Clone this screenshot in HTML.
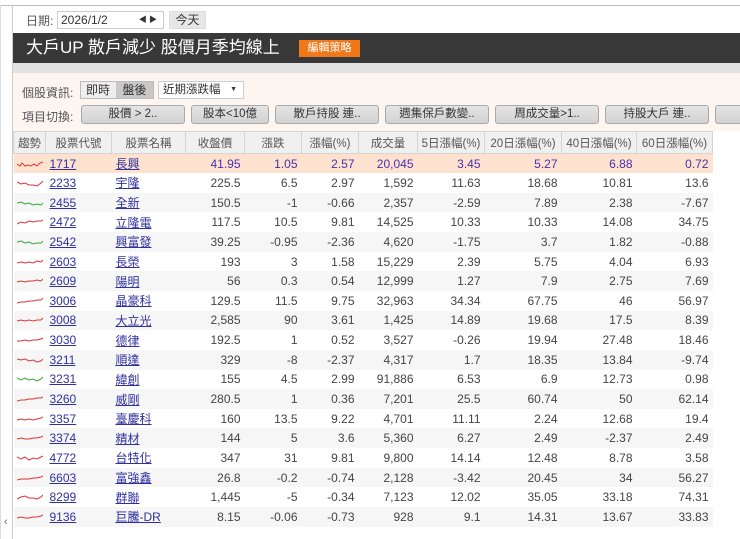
<!DOCTYPE html>
<html><head><meta charset="utf-8"><style>
*{margin:0;padding:0;box-sizing:border-box}
body{width:740px;height:539px;overflow:hidden;background:#fff;font-family:"Liberation Sans","Noto Sans CJK TC",sans-serif;font-size:12px;color:#444;position:relative}
.a{position:absolute}
.btn{position:absolute;top:105px;height:19px;background:linear-gradient(#e4e4e4,#d2d2d2);border:1px solid #aaa;border-radius:3px;font-size:11.5px;color:#333;text-align:center;line-height:17px}
table{position:absolute;left:13px;top:131px;border-collapse:collapse;table-layout:fixed;width:699px}
th{height:22px;background:#f0f0f0;border:1px solid #d4d4d4;font-weight:normal;font-size:11.5px;color:#555}
td{height:19.65px;text-align:right;padding-right:4px;font-size:12px;color:#444;white-space:nowrap}
tr:nth-child(even) td{background:#f6f6f6}
tr.hl td{background:#fde3cf;color:#4b2fb0}
td.c,td.n{text-align:left;padding-left:4px}
td a{color:#3030a0;text-decoration:underline}
td.t{padding:0 2px;text-align:center}
</style></head><body>
<div class="a" style="left:0;top:5px;width:740px;height:1px;background:#bbb"></div>
<div class="a" style="left:12px;top:5px;width:1px;height:534px;background:#ccc"></div>
<div class="a" style="left:0;top:5px;width:1px;height:534px;background:#ddd"></div>
<div class="a" style="left:4px;top:516px;font-size:11px;color:#666">‹</div>
<div class="a" style="left:26px;top:12px;font-size:12px;color:#555">日期:</div>
<div class="a" style="left:57px;top:11px;width:107px;height:18px;border:1px solid #ccc;font-size:12px;line-height:16px;padding-left:3px;color:#333">2026/1/2<span style="position:absolute;right:6px;font-size:8px">◀ ▶</span></div>
<div class="a" style="left:169px;top:11px;width:37px;height:18px;background:#e6e6e6;border:1px solid #ddd;text-align:center;line-height:16px;color:#333">今天</div>
<div class="a" style="left:13px;top:33px;width:727px;height:30px;background:#383838"></div>
<div class="a" style="left:26px;top:36px;font-size:17px;color:#fff;line-height:24px;white-space:nowrap">大戶UP 散戶減少 股價月季均線上</div>
<div class="a" style="left:299px;top:40px;width:61px;height:17px;background:#f07818;color:#fff;font-size:11px;text-align:center;line-height:17px">編輯策略</div>
<div class="a" style="left:13px;top:63px;width:727px;height:10px;background:#e2e2e2"></div>
<div class="a" style="left:13px;top:73px;width:727px;height:58px;background:#fdf5f0"></div>
<div class="a" style="left:22px;top:84px;color:#555">個股資訊:</div>
<div class="a" style="left:80px;top:81px;width:74px;height:18px;border:1px solid #bbb;background:#eee"></div>
<div class="a" style="left:81px;top:82px;width:34px;height:16px;text-align:center;line-height:16px;color:#333">即時</div>
<div class="a" style="left:116px;top:82px;width:37px;height:16px;background:#c8c8c8;text-align:center;line-height:16px;color:#333">盤後</div>
<div class="a" style="left:158px;top:81px;width:86px;height:18px;border:1px solid #ccc;background:#fff;line-height:16px;padding-left:4px;font-size:11.5px;color:#333">近期漲跌幅<span style="position:absolute;right:6px;font-size:7px">▼</span></div>
<div class="a" style="left:22px;top:108px;color:#555">項目切換:</div>
<div class="btn" style="left:81px;width:104px">股價 &gt; 2..</div>
<div class="btn" style="left:191px;width:78px">股本&lt;10億</div>
<div class="btn" style="left:275px;width:104px">散戶持股 連..</div>
<div class="btn" style="left:385px;width:104px">週集保戶數變..</div>
<div class="btn" style="left:495px;width:104px">周成交量&gt;1..</div>
<div class="btn" style="left:605px;width:104px">持股大戶 連..</div>
<div class="btn" style="left:715px;width:40px"></div>
<table>
<colgroup><col style="width:32px"><col style="width:66px"><col style="width:74px"><col style="width:59px"><col style="width:57px"><col style="width:57px"><col style="width:59px"><col style="width:67px"><col style="width:77px"><col style="width:75px"><col style="width:76px"></colgroup>
<tr><th>趨勢</th><th>股票代號</th><th>股票名稱</th><th>收盤價</th><th>漲跌</th><th>漲幅(%)</th><th>成交量</th><th>5日漲幅(%)</th><th>20日漲幅(%)</th><th>40日漲幅(%)</th><th>60日漲幅(%)</th></tr>
<tr class="hl"><td class="t"><svg width="26" height="8"><polyline points="0,4 3,6 5,3 8,6 11,5 14,6 17,4 20,6 23,3 26,2" fill="none" stroke="#d33" stroke-width="1"/></svg></td><td class="c"><a>1717</a></td><td class="n"><a>長興</a></td><td>41.95</td><td>1.05</td><td>2.57</td><td>20,045</td><td>3.45</td><td>5.27</td><td>6.88</td><td>0.72</td></tr>
<tr><td class="t"><svg width="26" height="8"><polyline points="0,3 4,5 8,4 12,6 16,6 20,7 24,4 26,2" fill="none" stroke="#d33"/></svg></td><td class="c"><a>2233</a></td><td class="n"><a>宇隆</a></td><td>225.5</td><td>6.5</td><td>2.97</td><td>1,592</td><td>11.63</td><td>18.68</td><td>10.81</td><td>13.6</td></tr>
<tr><td class="t"><svg width="26" height="8"><polyline points="0,4 4,3 8,5 12,4 16,6 20,5 24,6 26,4" fill="none" stroke="#3a3"/></svg></td><td class="c"><a>2455</a></td><td class="n"><a>全新</a></td><td>150.5</td><td>-1</td><td>-0.66</td><td>2,357</td><td>-2.59</td><td>7.89</td><td>2.38</td><td>-7.67</td></tr>
<tr><td class="t"><svg width="26" height="8"><polyline points="0,6 4,4 8,5 12,3 16,4 20,3 24,3 26,2" fill="none" stroke="#d33"/></svg></td><td class="c"><a>2472</a></td><td class="n"><a>立隆電</a></td><td>117.5</td><td>10.5</td><td>9.81</td><td>14,525</td><td>10.33</td><td>10.33</td><td>14.08</td><td>34.75</td></tr>
<tr><td class="t"><svg width="26" height="8"><polyline points="0,4 4,3 8,5 12,4 16,6 20,5 24,5 26,3" fill="none" stroke="#3a3"/></svg></td><td class="c"><a>2542</a></td><td class="n"><a>興富發</a></td><td>39.25</td><td>-0.95</td><td>-2.36</td><td>4,620</td><td>-1.75</td><td>3.7</td><td>1.82</td><td>-0.88</td></tr>
<tr><td class="t"><svg width="26" height="8"><polyline points="0,5 4,4 8,5 12,4 16,5 20,3 24,4 26,2" fill="none" stroke="#d33"/></svg></td><td class="c"><a>2603</a></td><td class="n"><a>長榮</a></td><td>193</td><td>3</td><td>1.58</td><td>15,229</td><td>2.39</td><td>5.75</td><td>4.04</td><td>6.93</td></tr>
<tr><td class="t"><svg width="26" height="8"><polyline points="0,5 4,4 8,5 12,4 16,4 20,3 24,4 26,2" fill="none" stroke="#d33"/></svg></td><td class="c"><a>2609</a></td><td class="n"><a>陽明</a></td><td>56</td><td>0.3</td><td>0.54</td><td>12,999</td><td>1.27</td><td>7.9</td><td>2.75</td><td>7.69</td></tr>
<tr><td class="t"><svg width="26" height="8"><polyline points="0,6 4,5 8,5 12,4 16,4 20,3 24,3 26,1" fill="none" stroke="#d33"/></svg></td><td class="c"><a>3006</a></td><td class="n"><a>晶豪科</a></td><td>129.5</td><td>11.5</td><td>9.75</td><td>32,963</td><td>34.34</td><td>67.75</td><td>46</td><td>56.97</td></tr>
<tr><td class="t"><svg width="26" height="8"><polyline points="0,5 4,4 8,5 12,4 16,5 20,4 24,4 26,2" fill="none" stroke="#d33"/></svg></td><td class="c"><a>3008</a></td><td class="n"><a>大立光</a></td><td>2,585</td><td>90</td><td>3.61</td><td>1,425</td><td>14.89</td><td>19.68</td><td>17.5</td><td>8.39</td></tr>
<tr><td class="t"><svg width="26" height="8"><polyline points="0,5 4,5 8,4 12,5 16,4 20,4 24,3 26,2" fill="none" stroke="#d33"/></svg></td><td class="c"><a>3030</a></td><td class="n"><a>德律</a></td><td>192.5</td><td>1</td><td>0.52</td><td>3,527</td><td>-0.26</td><td>19.94</td><td>27.48</td><td>18.46</td></tr>
<tr><td class="t"><svg width="26" height="8"><polyline points="0,3 4,4 8,3 12,5 16,4 20,6 24,5 26,3" fill="none" stroke="#d33"/></svg></td><td class="c"><a>3211</a></td><td class="n"><a>順達</a></td><td>329</td><td>-8</td><td>-2.37</td><td>4,317</td><td>1.7</td><td>18.35</td><td>13.84</td><td>-9.74</td></tr>
<tr><td class="t"><svg width="26" height="8"><polyline points="0,3 4,5 8,3 12,5 16,4 20,6 24,4 26,2" fill="none" stroke="#3a3"/></svg></td><td class="c"><a>3231</a></td><td class="n"><a>緯創</a></td><td>155</td><td>4.5</td><td>2.99</td><td>91,886</td><td>6.53</td><td>6.9</td><td>12.73</td><td>0.98</td></tr>
<tr><td class="t"><svg width="26" height="8"><polyline points="0,6 4,5 8,5 12,4 16,4 20,3 24,3 26,2" fill="none" stroke="#d33"/></svg></td><td class="c"><a>3260</a></td><td class="n"><a>威剛</a></td><td>280.5</td><td>1</td><td>0.36</td><td>7,201</td><td>25.5</td><td>60.74</td><td>50</td><td>62.14</td></tr>
<tr><td class="t"><svg width="26" height="8"><polyline points="0,5 4,4 8,5 12,4 16,5 20,4 24,3 26,2" fill="none" stroke="#d33"/></svg></td><td class="c"><a>3357</a></td><td class="n"><a>臺慶科</a></td><td>160</td><td>13.5</td><td>9.22</td><td>4,701</td><td>11.11</td><td>2.24</td><td>12.68</td><td>19.4</td></tr>
<tr><td class="t"><svg width="26" height="8"><polyline points="0,5 4,4 8,5 12,5 16,4 20,4 24,3 26,2" fill="none" stroke="#d33"/></svg></td><td class="c"><a>3374</a></td><td class="n"><a>精材</a></td><td>144</td><td>5</td><td>3.6</td><td>5,360</td><td>6.27</td><td>2.49</td><td>-2.37</td><td>2.49</td></tr>
<tr><td class="t"><svg width="26" height="8"><polyline points="0,3 4,5 8,3 12,6 16,4 20,5 24,3 26,2" fill="none" stroke="#d33"/></svg></td><td class="c"><a>4772</a></td><td class="n"><a>台特化</a></td><td>347</td><td>31</td><td>9.81</td><td>9,800</td><td>14.14</td><td>12.48</td><td>8.78</td><td>3.58</td></tr>
<tr><td class="t"><svg width="26" height="8"><polyline points="0,6 4,5 8,5 12,5 16,4 20,4 24,3 26,2" fill="none" stroke="#d33"/></svg></td><td class="c"><a>6603</a></td><td class="n"><a>富強鑫</a></td><td>26.8</td><td>-0.2</td><td>-0.74</td><td>2,128</td><td>-3.42</td><td>20.45</td><td>34</td><td>56.27</td></tr>
<tr><td class="t"><svg width="26" height="8"><polyline points="0,6 4,4 8,3 12,5 16,5 20,6 24,4 26,2" fill="none" stroke="#d33"/></svg></td><td class="c"><a>8299</a></td><td class="n"><a>群聯</a></td><td>1,445</td><td>-5</td><td>-0.34</td><td>7,123</td><td>12.02</td><td>35.05</td><td>33.18</td><td>74.31</td></tr>
<tr><td class="t"><svg width="26" height="8"><polyline points="0,5 4,4 8,5 12,5 16,4 20,4 24,3 26,2" fill="none" stroke="#d33"/></svg></td><td class="c"><a>9136</a></td><td class="n"><a>巨騰-DR</a></td><td>8.15</td><td>-0.06</td><td>-0.73</td><td>928</td><td>9.1</td><td>14.31</td><td>13.67</td><td>33.83</td></tr>
</table>
</body></html>
